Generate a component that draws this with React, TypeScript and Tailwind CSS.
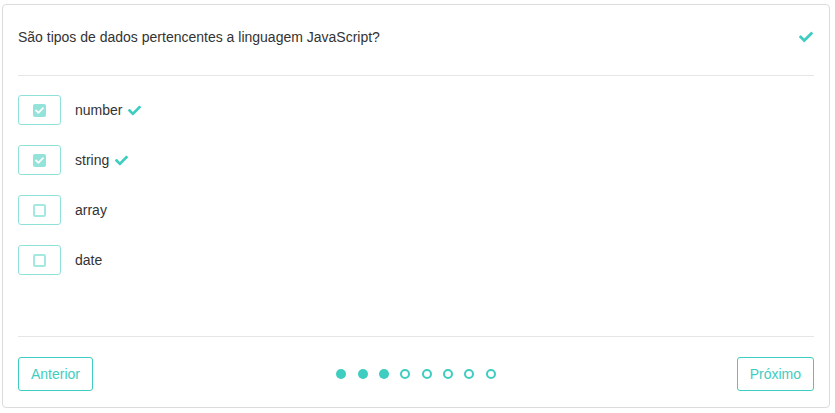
import React from "react";

const CheckIcon = ({ className }: { className?: string }) => (
  <svg viewBox="0 0 512 512" className={className} fill="currentColor">
    <path d="M173.898 439.404l-166.4-166.4c-9.997-9.997-9.997-26.206 0-36.204l36.203-36.204c9.997-9.998 26.207-9.998 36.204 0L192 312.69 432.095 72.596c9.997-9.997 26.207-9.997 36.204 0l36.203 36.204c9.997 9.997 9.997 26.206 0 36.204l-294.4 294.401c-9.998 9.997-26.207 9.997-36.204-.001z" />
  </svg>
);

const options = [
  { label: "number", checked: true },
  { label: "string", checked: true },
  { label: "array", checked: false },
  { label: "date", checked: false },
];

export default function App() {
  return (
    <div className="w-[835px] h-[413px] bg-white pl-[2px] pt-[4px]" style={{ fontFamily: '"Liberation Sans", Arial, sans-serif' }}>
      <div className="w-[828px] h-[404px] border border-[#dcdcdc] rounded-[4px] px-[15px] flex flex-col">
        <div className="flex items-center justify-between pt-[24px] pb-[30px] border-b border-[#e6e6e6]">
          <span className="text-[14px] leading-[16px] text-[#333]">São tipos de dados pertencentes a linguagem JavaScript?</span>
          <CheckIcon className="w-[14px] h-[14px] text-[#3ecdc0] mr-[1px]" />
        </div>
        <div className="flex-1 flex flex-col gap-[20px] pt-[19px]">
          {options.map((o) => (
            <div key={o.label} className="flex items-center h-[30px]">
              <div className="w-[43px] h-[30px] border border-[#8fe2d9] rounded-[3px] flex items-center justify-center">
                {o.checked ? (
                  <div className="w-[13px] h-[13px] rounded-[2px] bg-[#93e3da] flex items-center justify-center">
                    <CheckIcon className="w-[9px] h-[9px] text-white" />
                  </div>
                ) : (
                  <div className="w-[13px] h-[13px] rounded-[2px] border-2 border-[#a5e8e0]" />
                )}
              </div>
              <span className="ml-[14px] text-[14px] leading-[16px] text-[#333]">{o.label}</span>
              {o.checked && <CheckIcon className="ml-[6px] w-[13px] h-[13px] text-[#3ecdc0]" />}
            </div>
          ))}
        </div>
        <div className="border-t border-[#e6e6e6] pt-[20px] pb-[16px] grid grid-cols-[1fr_auto_1fr] items-center">
          <div>
            <button className="h-[34px] px-3 border border-[#3ecdc0] rounded-[3px] text-[14px] text-[#3ecdc0] bg-white">Anterior</button>
          </div>
          <div className="flex items-center gap-[11.4px]">
            {[0, 1, 2, 3, 4, 5, 6, 7].map((i) =>
              i < 3 ? (
                <div key={i} className="w-[10px] h-[10px] rounded-full bg-[#3ecdc0]" />
              ) : (
                <div key={i} className="w-[10px] h-[10px] rounded-full border-2 border-[#3ecdc0]" />
              )
            )}
          </div>
          <div className="flex justify-end">
            <button className="h-[34px] px-3 border border-[#3ecdc0] rounded-[3px] text-[14px] text-[#3ecdc0] bg-white">Próximo</button>
          </div>
        </div>
      </div>
    </div>
  );
}
